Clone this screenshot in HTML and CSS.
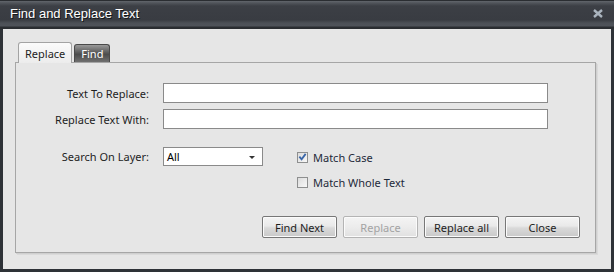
FILE: index.html
```html
<!DOCTYPE html>
<html lang="en">
<head>
    <meta charset="UTF-8">
    <title>Find and Replace Text</title>
    <link rel="stylesheet" href="styles.css">
</head>
<body>
    <div class="window">
        <div class="titlebar">
            <span class="title">Find and Replace Text</span>
            <svg class="close" width="10" height="9" viewBox="0 0 10 9">
                <path d="M1 1 L9 8 M9 1 L1 8" stroke="#aab4be" stroke-width="2.4" fill="none"/>
            </svg>
        </div>

        <div class="client">
            <div class="tabs">
                <div class="tab active">Replace</div>
                <div class="tab">Find</div>
            </div>

            <div class="panel">
                <div class="row">
                    <label class="label">Text To Replace:</label>
                    <div class="input wide"></div>
                </div>
                <div class="row">
                    <label class="label">Replace Text With:</label>
                    <div class="input wide"></div>
                </div>

                <div class="row layer-row">
                    <label class="label">Search On Layer:</label>
                    <div class="input select">
                        <span>All</span>
                        <span class="arrow"></span>
                    </div>
                    <div class="checks">
                        <div class="check">
                            <span class="box">
                                <svg width="10" height="10" viewBox="0 0 10 10">
                                    <path d="M1.5 4.5 L4 7.5 L8.5 1.5" stroke="#3a66a8" stroke-width="2" fill="none"/>
                                </svg>
                            </span>
                            Match Case
                        </div>
                        <div class="check">
                            <span class="box"></span>
                            Match Whole Text
                        </div>
                    </div>
                </div>

                <div class="buttons">
                    <button>Find Next</button>
                    <button disabled>Replace</button>
                    <button>Replace all</button>
                    <button>Close</button>
                </div>
            </div>
        </div>
    </div>
</body>
</html>
```

FILE: styles.css
```css
body {
    margin: 0;
    background: #2e3237;
    font-family: "Noto Sans", "Open Sans", sans-serif;
    font-size: 11px;
    color: #1e1e1e;
}
.window {
    width: 614px;
    height: 272px;
    background: #2e3237;
}
.titlebar {
    height: 29px;
    box-sizing: border-box;
    display: flex;
    align-items: center;
    justify-content: space-between;
    padding: 0 11px 3px 10px;
    background: linear-gradient(#2a2d31 0, #2a2d31 1px, #62666c 1px, #50545a 3px, #3c3f45 6px, #393c42 20px, #4c5056 23px, #4f535a 26px, #2a2d31 27px);
}
.title {
    font-family: "Liberation Sans", Arial, sans-serif;
    font-size: 13px;
    color: #ffffff;
    text-shadow: 1px 1px 0 #15171a;
}
.close {
    display: block;
    margin-top: 1px;
}
.client {
    margin: 0 3px;
    height: 240px;
    background: #e6e6e6;
    padding: 13px 0 0 12px;
    box-sizing: border-box;
}
.tabs {
    display: flex;
    align-items: flex-end;
    gap: 2px;
    padding-left: 3px;
    height: 20px;
}
.tab {
    height: 18px;
    padding: 0 6px;
    display: flex;
    align-items: center;
    box-sizing: border-box;
    border: 1px solid #4a4a4a;
    border-bottom: none;
    border-radius: 3px 3px 0 0;
    color: #ffffff;
    background: linear-gradient(#9a9a9a, #5a5a5a 45%, #4c4c4c 55%, #707070);
}
.tab.active {
    height: 21px;
    margin-bottom: -1px;
    position: relative;
    padding: 0 6px;
    color: #1e1e1e;
    border-color: #a3a3a3;
    background: linear-gradient(#fbfbfb, #ececec);
}
.panel {
    width: 581px;
    height: 191px;
    box-sizing: border-box;
    border: 1px solid #a6a6a6;
    box-shadow: 1px 1px 0 #cfcfcf, 2px 2px 0 #dadada;
    padding: 20px 15px 0 0;
    display: flex;
    flex-direction: column;
}
.row {
    display: flex;
    align-items: center;
    margin-bottom: 6px;
}
.label {
    width: 133px;
    text-align: right;
    margin-right: 14px;
}
.input {
    height: 20px;
    box-sizing: border-box;
    border: 1px solid #8a8a8a;
    background: #ffffff;
}
.wide {
    width: 385px;
}
.layer-row {
    margin-top: 12px;
    align-items: flex-start;
}
.layer-row .label {
    line-height: 19px;
}
.select {
    width: 100px;
    height: 19px;
    display: flex;
    align-items: center;
    justify-content: space-between;
    padding: 0 7px 0 3px;
    color: #000000;
}
.arrow {
    width: 0;
    height: 0;
    border-left: 3px solid transparent;
    border-right: 3px solid transparent;
    border-top: 3px solid #333333;
    margin-top: 1px;
}
.checks {
    margin-left: 34px;
    margin-top: 3px;
    display: flex;
    flex-direction: column;
    gap: 11px;
}
.check {
    display: flex;
    align-items: center;
    gap: 5px;
    height: 14px;
    color: #1e2a3a;
}
.box {
    width: 11px;
    height: 11px;
    box-sizing: border-box;
    border: 1px solid #8e8f8f;
    background: linear-gradient(135deg, #dcdcdc, #f8f8f8);
    display: flex;
    align-items: center;
    justify-content: center;
}
.buttons {
    display: flex;
    justify-content: flex-end;
    gap: 6px;
    margin-top: 21px;
}
button {
    width: 75px;
    height: 22px;
    font-family: inherit;
    font-size: 11px;
    color: #1e1e1e;
    border: 1px solid #777777;
    border-radius: 2px;
    background: linear-gradient(#f4f4f4, #e9e9e9 45%, #d9d9d9 55%, #c9c9c9);
    box-shadow: inset 0 0 0 1px #fbfbfb;
    padding: 0;
}
button:disabled {
    color: #a3a3a3;
    border-color: #b4b4b4;
    background: linear-gradient(#f4f4f4, #ececec 50%, #e0e0e0);
}
```
